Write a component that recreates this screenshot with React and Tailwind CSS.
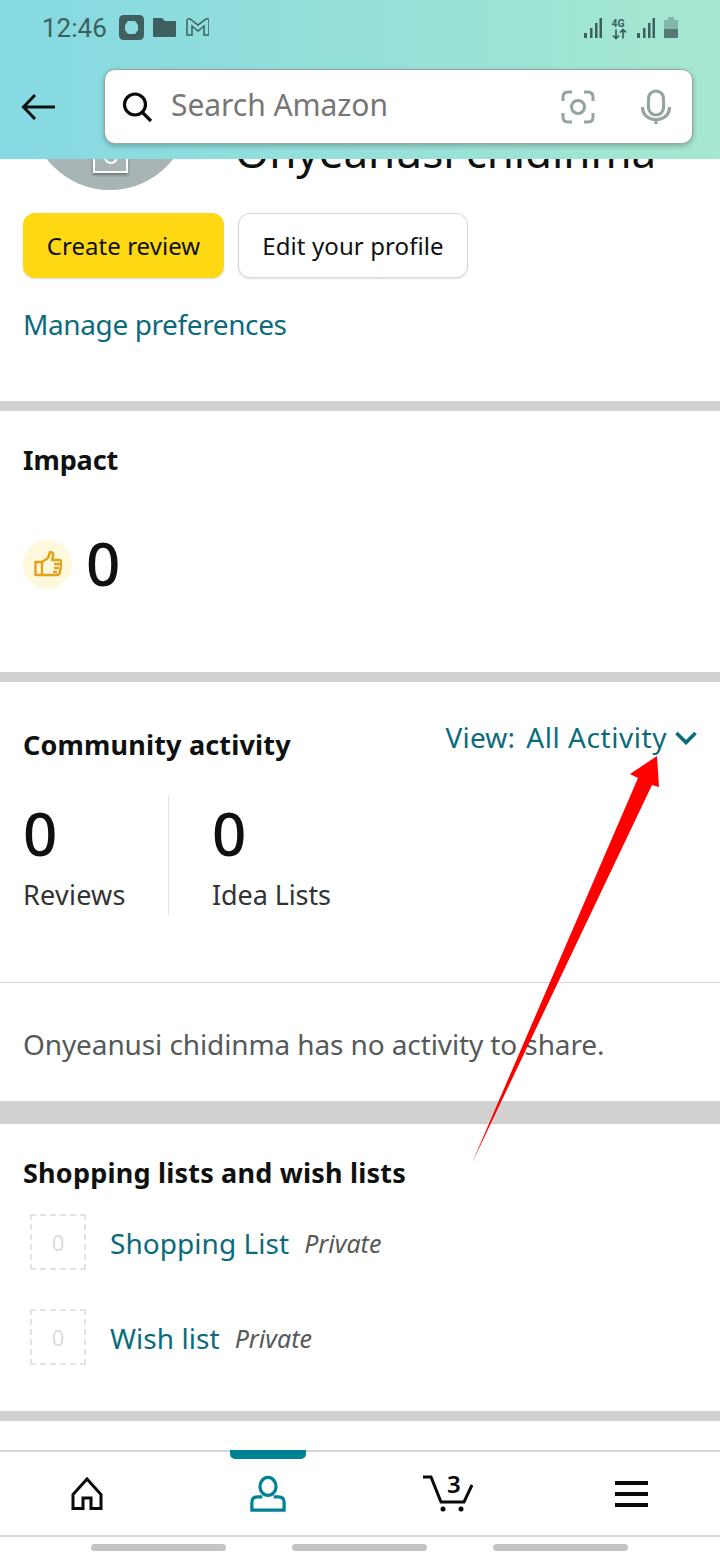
const SectionBar = ({ className = 'h-[10px]' }) => <div className={`${className} bg-[#d1d1d1]`} />

function StatusIcons() {
  return (
    <svg width="94" height="24" viewBox="0 0 94 24" className="text-[#3f5f5e]" fill="currentColor">
      <rect x="0" y="17" width="3" height="5" /><rect x="6" y="12" width="2.5" height="10" /><rect x="11" y="7" width="2.5" height="15" /><rect x="15.500" y="2" width="2.500" height="20" />
      <text x="27.500" y="10.500" fontSize="10.500" fontWeight="700" fontFamily="Roboto, sans-serif">4G</text>
      <path d="M32 13.500v9M29 19.500l3 3 3-3M39 22.500v-9M36 16.500l3-3 3 3" fill="none" stroke="currentColor" strokeWidth="1.700" />
      <rect x="53" y="17" width="3" height="5" /><rect x="59" y="12" width="2.5" height="10" /><rect x="64" y="7" width="2.5" height="15" /><rect x="68.500" y="2" width="2.500" height="20" />
      <path d="M80 5q0-1 1-1h3V1h6v3h3q1 0 1 1v8H80z" opacity="0.35" />
      <path d="M80 13h14v8q0 1-1 1H81q-1 0-1-1z" opacity="0.8" />
    </svg>
  )
}

function Header() {
  return (
    <div className="relative z-10 h-[159px] bg-gradient-to-r from-[#85d9e3] to-[#a6e7cf]">
      <div className="flex items-center justify-between pl-[42px] pr-[42px] pt-[13px] h-[42px]">
        <div className="flex items-center gap-[12px] text-[#3f5f5e]">
          <span className="text-[26px] leading-none font-['Roboto',sans-serif]">12:46</span>
          <svg width="90" height="26" viewBox="0 0 90 26" fill="currentColor">
            <path fillRule="evenodd" d="M5 0h15q5 0 5 5v15q0 5-5 5H5q-5 0-5-5V5q0-5 5-5zM9 6l-3 4v5l3 4h7l3-4v-5l-3-4z" />
            <path d="M35 3h8l3 3h10q1 0 1 1v14q0 1-1 1H35q-1 0-1-1V4q0-1 1-1z" />
            <path d="M68 20V6q0-3 3-2l8 6 8-6q3-1 3 2V20h-5V11l-6 5-6-5v9z" fill="none" stroke="currentColor" strokeWidth="1.500" />
          </svg>
        </div>
        <StatusIcons />
      </div>
      <div className="flex items-center mt-[27px]">
        <div className="w-[104px] flex justify-start pl-[21px]">
          <svg width="36" height="28" viewBox="0 0 36 28" fill="none" stroke="#0f1111" strokeWidth="3">
            <path d="M34 14H3M14 2L2.5 14 14 26" />
          </svg>
        </div>
        <div className="w-[589px] h-[75px] bg-white rounded-[11px] border border-[#9aa5a5] shadow-[0_2px_5px_rgba(0,0,0,0.25)] flex items-center pl-[16px] pr-[21px]">
          <svg width="32" height="32" viewBox="0 0 32 32" fill="none" stroke="#0a0a0a" strokeWidth="3.2">
            <circle cx="14" cy="13.5" r="10.5" />
            <path d="M21.5 21.5l8.5 8.5" />
          </svg>
          <span className="ml-[18px] mt-[-4px] text-[30px] leading-none text-[#767676] font-['Noto_Sans',sans-serif] tracking-[-0.05px]">Search Amazon</span>
          <svg className="ml-auto" width="34" height="34" viewBox="0 0 34 34" fill="none" stroke="#96a3a3" strokeWidth="3">
            <path d="M2 11V7q0-5 5-5h4M23 2h4q5 0 5 5v4M32 23v4q0 5-5 5h-4M11 32H7q-5 0-5-5v-4" />
            <circle cx="17" cy="17" r="6.5" />
          </svg>
          <svg className="ml-[46px]" width="30" height="36" viewBox="0 0 30 36" fill="none" stroke="#96a3a3" strokeWidth="3.2">
            <rect x="7.5" y="2" width="15" height="24" rx="7.5" />
            <path d="M1.5 18c0 8 6 12.5 13.500 12.500S28.500 26 28.500 18M15 30v5" />
          </svg>
        </div>
      </div>
    </div>
  )
}

function BottomNav() {
  return (
    <div className="relative h-[139px] bg-white">
      <div className="absolute top-0 left-0 right-0 h-[2px] bg-[#cfd8da]" />
      <div className="absolute top-0 left-[230px] w-[76px] h-[9px] bg-[#008296] rounded-b-[5px]" />
      <div className="flex h-[85px] items-center pl-[70px] pt-[2px]">
        <svg width="34" height="34" viewBox="0 0 34 34" fill="none" stroke="#0a0a0a" strokeWidth="3">
          <path d="M17 2L3 17.500V31.500H13V21H21V31.500H31V17.500z" />
        </svg>
        <svg width="36" height="38" viewBox="0 0 38 38" fill="none" stroke="#008296" strokeWidth="3.400" className="ml-[146px]">
          <ellipse cx="19" cy="11" rx="8.500" ry="9.500" />
          <path d="M13 22H8q-6 0-6 6V36H36V28q0-6-6-6H25" />
        </svg>
        <div className="relative ml-[137px] w-[50px] h-[40px]">
          <svg width="50" height="40" viewBox="0 0 50 40" fill="none" stroke="#0a0a0a" strokeWidth="3">
            <path d="M0 3H8L18 28H41L49 11" />
            <circle cx="20" cy="35" r="2.500" fill="#0a0a0a" stroke="none" />
            <circle cx="38" cy="35" r="2.500" fill="#0a0a0a" stroke="none" />
          </svg>
          <span className="absolute left-[24px] top-[-3px] text-[24px] leading-[26px] font-semibold text-[#0a0a0a] font-['Noto_Sans',sans-serif]">3</span>
        </div>
        <div className="ml-[142px] flex flex-col gap-[7px] w-[33px]">
          <div className="h-[4px] bg-[#0a0a0a]" />
          <div className="h-[4px] bg-[#0a0a0a]" />
          <div className="h-[4px] bg-[#0a0a0a]" />
        </div>
      </div>
      <div className="h-[2px] bg-[#cfd8da]" />
      <div className="flex pl-[91px] gap-[66px] pt-[7px]">
        <div className="w-[135px] h-[7px] rounded-full bg-[#c4c4c4]" />
        <div className="w-[135px] h-[7px] rounded-full bg-[#c4c4c4]" />
        <div className="w-[135px] h-[7px] rounded-full bg-[#c4c4c4]" />
      </div>
    </div>
  )
}

function ListRow({ name, className = '' }) {
  return (
    <div className={`flex items-center pl-[30px] ${className}`}>
      <div className="w-[56px] h-[56px] border-2 border-dashed border-[#e3e3e3] flex items-center justify-center text-[22px] text-[#dcdcdc]">0</div>
      <span className="ml-[24px] mt-[2px] text-[28px] leading-none tracking-[0.05px] text-[#0b6b7d]">{name}</span>
      <span className="ml-[15px] mt-[2px] text-[25px] leading-none italic text-[#565959]">Private</span>
    </div>
  )
}

export default function App() {
  return (
    <div className="relative w-[720px] h-[1560px] overflow-hidden bg-white font-['Noto_Sans',sans-serif] text-[#0f1111]">
      <Header />

      {/* Profile, scrolled under the header */}
      <div className="h-[242px] px-[23px] overflow-hidden">
        <div className="flex items-start h-[54px] overflow-visible">
          <div className="relative mt-[-129px] ml-[7px] w-[160px] h-[160px] shrink-0 rounded-full bg-[#a9b5b5]">
            <div className="absolute left-[63px] top-[100px] w-[35px] h-[43px] border-2 border-white bg-[#a9b5b5] shadow-[0_2px_3px_rgba(0,0,0,0.35)]">
              <div className="absolute left-[9px] top-[18px] w-[14px] h-[14px] rounded-full border-2 border-white" />
            </div>
          </div>
          <span className="ml-[45px] mt-[-38px] text-[44px] leading-[60px] whitespace-nowrap tracking-[-0.1px]">Onyeanusi chidinma</span>
        </div>
        <div className="flex gap-[14px]">
          <button className="w-[201px] h-[65px] rounded-[12px] bg-[#ffd814] text-[24px] tracking-[0.05px] shadow-[0_1px_2px_rgba(0,0,0,0.15)]">Create review</button>
          <button className="w-[230px] h-[65px] rounded-[12px] bg-white border border-[#d5d9d9] text-[24px] tracking-[0.1px] shadow-[0_1px_2px_rgba(0,0,0,0.12)]">Edit your profile</button>
        </div>
        <div className="mt-[28px] text-[28px] leading-[36px] tracking-[-0.39px] text-[#0b6b7d]">Manage preferences</div>
      </div>
      <SectionBar />

      {/* Impact */}
      <div className="h-[261px] px-[23px] pt-[30px]">
        <h2 className="text-[27px] leading-[38px] font-bold tracking-[-0.1px]">Impact</h2>
        <div className="flex items-center mt-[55px]">
          <div className="w-[49px] h-[49px] rounded-full bg-[#fef8dc] flex items-center justify-center">
            <svg width="28" height="26" viewBox="0 0 28 26" fill="none" stroke="#e3a11c" strokeWidth="2.400" strokeLinejoin="round">
              <path d="M1.500 11H8V24H1.500z" />
              <path d="M8 11l6-4 2-6q4 0 3 4l-1 4h8q2 1 1 4v3q0 2-1 3v2q-1 3-3 3H8" />
              <path d="M20 13h6M20 17h5M19 21h4" />
            </svg>
          </div>
          <span className="ml-[14px] mt-[-2px] text-[60px] leading-[62px] font-medium">0</span>
        </div>
      </div>
      <SectionBar />

      {/* Community activity */}
      <div className="h-[300px] relative">
        <div className="flex items-start justify-between px-[23px] pt-[38px] h-[114px]">
          <h2 className="text-[27px] leading-[50px] font-bold tracking-[0.17px]">Community activity</h2>
          <div className="flex items-center text-[28px] leading-[36px] text-[#0b6b7d] mt-[-1px]">
            <span className="tracking-[0.2px]">View:</span>
            <span className="ml-[11px] tracking-[0.55px]">All Activity</span>
            <svg className="ml-[8px] mt-[2px]" width="22" height="14" viewBox="0 0 22 14" fill="none" stroke="#0b6b7d" strokeWidth="3.600">
              <path d="M1.500 2l9.500 9.500L20.500 2" />
            </svg>
          </div>
        </div>
        <div className="flex h-[119px]">
          <div className="w-[146px] ml-[23px] border-r border-[#e2e2e2]">
            <div className="text-[60px] leading-[78px] mt-[-2px] font-medium">0</div>
            <div className="text-[27px] leading-[40px] mt-[3px] tracking-[0.25px] text-[#333]">Reviews</div>
          </div>
          <div className="ml-[43px]">
            <div className="text-[60px] leading-[78px] mt-[-2px] font-medium">0</div>
            <div className="text-[27px] leading-[40px] mt-[3px] tracking-[-0.1px] text-[#333]">Idea Lists</div>
          </div>
        </div>
        <div className="mt-[67px] h-px bg-[#d5d5d5]" />
        <div className="px-[23px] pt-[42px] text-[28px] leading-[38px] tracking-[-0.11px] text-[#565959]">Onyeanusi chidinma has no activity to share.</div>
      </div>
      <div className="mt-[119px]" />
      <SectionBar className="h-[23px]" />

      {/* Lists */}
      <div className="h-[287px] pt-[30px]">
        <h2 className="px-[23px] text-[27px] leading-[38px] font-bold tracking-[0.2px]">Shopping lists and wish lists</h2>
        <ListRow name="Shopping List" className="mt-[22px]" />
        <ListRow name="Wish list" className="mt-[39px]" />
      </div>
      <SectionBar />
      <div className="h-[29px]" />

      <BottomNav />

      {/* Annotation arrow drawn over the screenshot */}
      <svg className="absolute inset-0 z-20 pointer-events-none" width="720" height="1560" viewBox="0 0 720 1560">
        <polygon points="657,756 630,774 638,778 472,1163 652,785 659,787" fill="#ff0000" />
      </svg>
    </div>
  )
}
